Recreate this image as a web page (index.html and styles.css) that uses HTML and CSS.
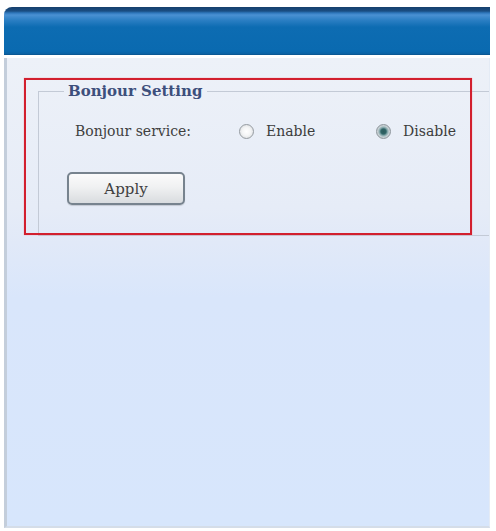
FILE: index.html
```html
<!DOCTYPE html>
<html lang="en">
<head>
<meta charset="utf-8">
<title>Bonjour Setting</title>
<link rel="stylesheet" href="styles.css">
</head>
<body>
<div class="frame">
  <div class="header"></div>
  <div class="panel">
    <fieldset class="group">
      <legend class="group-title">Bonjour Setting</legend>
      <div class="row">
        <span class="label">Bonjour service:</span>
        <label class="option option-enable"><input type="radio" name="bonjour" class="radio"><span>Enable</span></label>
        <label class="option option-disable"><input type="radio" name="bonjour" class="radio" checked><span>Disable</span></label>
      </div>
      <div class="actions">
        <button type="button" class="btn">Apply</button>
      </div>
    </fieldset>
    <div class="highlight"></div>
  </div>
</div>
</body>
</html>
```
FILE: styles.css
```css
html, body {
  margin: 0;
  padding: 0;
  background: #ffffff;
}

body {
  font-family: "DejaVu Serif", "Liberation Serif", serif;
  color: #3a3a3a;
}

.frame {
  margin-left: 4px;
  width: 486px;
  padding-top: 7px;
}

.header {
  height: 48px;
  border-radius: 8px 0 0 0;
  background: linear-gradient(to bottom,
    #163f6c 0px,
    #1a4d82 4px,
    #2f78bd 6px,
    #4a91d3 8px,
    #2c7fc4 13px,
    #0d6cb2 20px,
    #0a6ab0 44px,
    #0b5f9f 48px);
  box-shadow: inset 0 -1px 0 #0a5894;
}

.panel {
  position: relative;
  margin-top: 3px;
  height: 470px;
  box-sizing: border-box;
  border-left: 3px solid #c4cedb;
  border-right: 1px solid #e4ebf5;
  border-bottom: 2px solid #d5dde8;
  background: linear-gradient(to bottom,
    #edf1f8 0px,
    #e6ecf7 150px,
    #e1e9f8 185px,
    #d9e6fb 240px,
    #d7e6fc 470px);
  padding-top: 24px;
}

.group {
  margin: 0 0 0 31px;
  padding: 0 0 30px 0;
  border: 1px solid #c3cad6;
  border-right: none;
  min-width: 0;
}

.group-title {
  margin-left: 25px;
  padding: 0 5px 0 4px;
  font-size: 15px;
  font-weight: bold;
  color: #3d4f7c;
}

.row {
  display: flex;
  align-items: center;
  height: 20px;
  margin-top: 21px;
  font-size: 14px;
}

.label {
  box-sizing: border-box;
  width: 200px;
  padding-left: 36px;
  color: #404040;
}

.option {
  display: flex;
  align-items: center;
  gap: 12px;
  color: #3c3c3c;
}

.option-enable {
  width: 137px;
}

.radio {
  appearance: none;
  -webkit-appearance: none;
  margin: 0;
  width: 15px;
  height: 15px;
  border-radius: 50%;
  border: 1px solid #959ba1;
  background: radial-gradient(circle at 50% 50%, #ffffff 0, #f4f5f6 45%, #d2d5d8 100%);
  box-sizing: border-box;
}

.radio:checked {
  border-color: #8e969c;
  background: radial-gradient(circle at 50% 50%, #2c5a5c 0, #2f6466 28%, #7ea3a6 42%, #c9d2d6 62%, #b5bdc2 100%);
}

.actions {
  margin-top: 31px;
  padding-left: 28px;
}

.btn {
  width: 118px;
  height: 33px;
  border: 2px solid #77838e;
  border-radius: 5px;
  background: linear-gradient(to bottom, #fbfbfb 0%, #f0f1f2 45%, #d9dcdf 100%);
  font-family: "DejaVu Serif", "Liberation Serif", serif;
  font-size: 15px;
  color: #404040;
  padding: 0;
  box-shadow: 0 1px 1px rgba(0, 0, 0, 0.15);
}

.highlight {
  position: absolute;
  left: 17px;
  top: 20px;
  width: 448px;
  height: 157px;
  box-sizing: border-box;
  border: 2px solid #d21f2e;
  box-shadow: 0 0 1px #f08a96;
  pointer-events: none;
}
```
